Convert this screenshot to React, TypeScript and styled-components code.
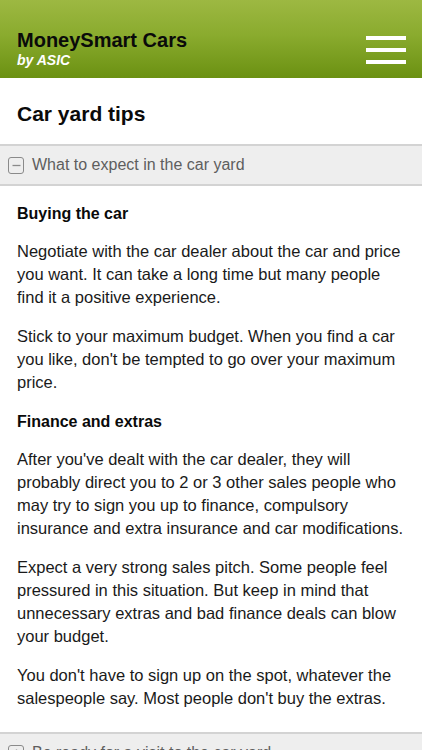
import * as React from 'react';
import styled, { createGlobalStyle } from 'styled-components';

const GlobalStyle = createGlobalStyle`
  html, body {
    margin: 0;
    padding: 0;
    background: #ffffff;
  }
  body {
    font-family: "Liberation Sans", Arial, sans-serif;
    color: #111111;
    -webkit-font-smoothing: antialiased;
  }
`;

const Page = styled.div`
  width: 422px;
  height: 750px;
  overflow: hidden;
  background: #ffffff;
`;

const Header = styled.header`
  height: 78px;
  box-sizing: border-box;
  padding: 0 16px 0 17px;
  display: flex;
  align-items: center;
  justify-content: space-between;
  background: linear-gradient(to bottom, #9db842 0%, #8aab2e 45%, #6b9112 100%);
`;

const Brand = styled.div`
  display: flex;
  flex-direction: column;
  padding-top: 20px;
`;

const BrandName = styled.div`
  font-size: 20px;
  font-weight: 700;
  color: #0a0a0a;
  line-height: 22px;
`;

const BrandSub = styled.div`
  font-size: 14px;
  font-weight: 700;
  font-style: italic;
  color: #ffffff;
  line-height: 18px;
`;

const MenuButton = styled.button`
  width: 40px;
  height: 28px;
  margin-top: 22px;
  padding: 0;
  border: 0;
  background: transparent;
  display: flex;
  flex-direction: column;
  justify-content: space-between;
`;

const MenuBar = styled.span`
  display: block;
  width: 40px;
  height: 4px;
  background: #ffffff;
`;

const Title = styled.h1`
  margin: 0;
  padding: 23px 17px 17px;
  font-size: 21px;
  font-weight: 700;
  line-height: 26px;
  color: #0a0a0a;
`;

const Section = styled.section``;

const SectionHead = styled.div`
  height: 42px;
  box-sizing: border-box;
  display: flex;
  align-items: center;
  gap: 8px;
  padding: 0 8px;
  background: #eeeeee;
  border-top: 2px solid #d3d3d3;
  border-bottom: 2px solid #d3d3d3;
`;

const ToggleBox = styled.span`
  width: 16px;
  height: 17px;
  box-sizing: border-box;
  border: 1.5px solid #8a8a8a;
  border-radius: 3px;
  display: flex;
  align-items: center;
  justify-content: center;
  flex: none;
`;

const SectionTitle = styled.span`
  font-size: 16px;
  color: #5e5e5e;
  white-space: nowrap;
`;

const SectionBody = styled.div`
  padding: 16px 17px 6px;
`;

const Heading = styled.h2`
  margin: 0 0 15px;
  font-size: 16px;
  font-weight: 700;
  line-height: 23px;
  color: #0a0a0a;
`;

const Para = styled.p`
  margin: 0 0 16px;
  font-size: 16.5px;
  line-height: 23px;
  color: #1a1a1a;
`;

const Toggle = ({ open }: { open: boolean }) => (
  <ToggleBox>
    <svg width="9" height="9" viewBox="0 0 9 9">
      <line x1="0.5" y1="4.5" x2="8.5" y2="4.5" stroke="#8a8a8a" strokeWidth="1.3" />
      {!open && <line x1="4.5" y1="0.5" x2="4.5" y2="8.5" stroke="#8a8a8a" strokeWidth="1.3" />}
    </svg>
  </ToggleBox>
);

export default function App() {
  return (
    <Page>
      <GlobalStyle />
      <Header>
        <Brand>
          <BrandName>MoneySmart Cars</BrandName>
          <BrandSub>by ASIC</BrandSub>
        </Brand>
        <MenuButton aria-label="Menu">
          <MenuBar />
          <MenuBar />
          <MenuBar />
        </MenuButton>
      </Header>
      <Title>Car yard tips</Title>
      <Section>
        <SectionHead>
          <Toggle open />
          <SectionTitle>What to expect in the car yard</SectionTitle>
        </SectionHead>
        <SectionBody>
          <Heading>Buying the car</Heading>
          <Para>
            Negotiate with the car dealer about the car and price you want. It can take a long
            time but many people find it a positive experience.
          </Para>
          <Para>
            Stick to your maximum budget. When you find a car you like, don't be tempted to go
            over your maximum price.
          </Para>
          <Heading>Finance and extras</Heading>
          <Para>
            After you've dealt with the car dealer, they will probably direct you to 2 or 3 other
            sales people who may try to sign you up to finance, compulsory insurance and extra
            insurance and car modifications.
          </Para>
          <Para>
            Expect a very strong sales pitch. Some people feel pressured in this situation. But
            keep in mind that unnecessary extras and bad finance deals can blow your budget.
          </Para>
          <Para>
            You don't have to sign up on the spot, whatever the salespeople say. Most people
            don't buy the extras.
          </Para>
        </SectionBody>
      </Section>
      <Section>
        <SectionHead>
          <Toggle open={false} />
          <SectionTitle>Be ready for a visit to the car yard</SectionTitle>
        </SectionHead>
      </Section>
    </Page>
  );
}
